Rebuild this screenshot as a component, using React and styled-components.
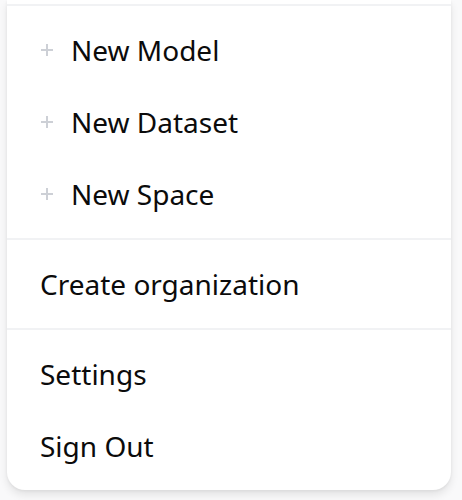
import styled, { createGlobalStyle } from "styled-components";

const GlobalStyle = createGlobalStyle`
  html, body {
    margin: 0;
    padding: 0;
    background: #f9f9fa;
    font-family: "Noto Sans", "Liberation Sans", sans-serif;
  }
`;

function PlusIcon() {
  return (
    <svg width="14" height="14" viewBox="0 0 14 14" fill="none">
      <path d="M7 1v12M1 7h12" stroke="#cdd0d6" strokeWidth="2" />
    </svg>
  );
}

function App() {
  return (
    <Page>
      <GlobalStyle />
      <Menu>
        <TopStrip />
        <Section>
          <Item>
            <Plus>
              <PlusIcon />
            </Plus>
            New Model
          </Item>
          <Item>
            <Plus>
              <PlusIcon />
            </Plus>
            New Dataset
          </Item>
          <Item>
            <Plus>
              <PlusIcon />
            </Plus>
            New Space
          </Item>
        </Section>
        <Section>
          <Item>Create organization</Item>
        </Section>
        <Section>
          <Item>Settings</Item>
          <Item>Sign Out</Item>
        </Section>
      </Menu>
    </Page>
  );
}

export default App;

const Page = styled.div`
  width: 462px;
  height: 500px;
  padding: 0 11px 0 7px;
  box-sizing: border-box;
  overflow: hidden;
`;

const Menu = styled.div`
  background: #fff;
  border-radius: 0 0 18px 18px;
  box-shadow: 0 5px 8px rgba(0, 0, 0, 0.09), 0 1px 3px rgba(0, 0, 0, 0.06);
`;

const TopStrip = styled.div`
  height: 4px;
`;

const Section = styled.div`
  border-top: 2px solid #f1f2f4;
  padding: 8px 0;
`;

const Item = styled.div`
  display: flex;
  align-items: center;
  height: 72px;
  padding-left: 33px;
  font-size: 28px;
  color: #0b0b0b;
`;

const Plus = styled.span`
  display: flex;
  width: 31px;
  margin-top: -1px;
`;
